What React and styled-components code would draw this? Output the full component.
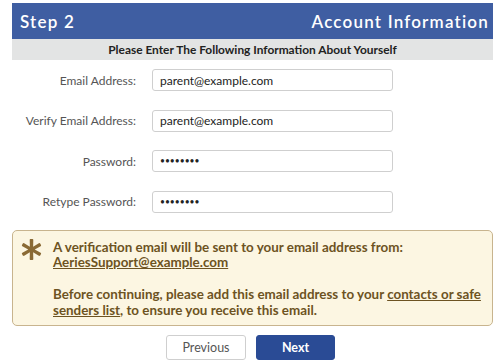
import { Fragment } from 'react';
import styled, { createGlobalStyle } from 'styled-components';
import { FaAsterisk } from 'react-icons/fa';

const GlobalStyle = createGlobalStyle`
  body {
    margin: 0;
    background: #ffffff;
    font-family: "Lato", "Open Sans", sans-serif;
  }
`;

const Page = styled.div`
  width: 481px;
  padding: 3px 0 0 12px;
`;

const Header = styled.div`
  height: 36px;
  padding: 0 4px 0 8px;
  display: flex;
  align-items: center;
  justify-content: space-between;
  background: #3f5ea2;
  color: #ffffff;
  font-size: 17px;
  font-weight: 600;
  letter-spacing: 1.2px;
`;

const SubHeader = styled.div`
  height: 21px;
  display: flex;
  align-items: center;
  justify-content: center;
  background: #e3e4e4;
  color: #222;
  font-size: 11.9px;
  font-weight: 700;
`;

const Form = styled.div`
  display: grid;
  grid-template-columns: 124px 241px;
  column-gap: 16px;
  row-gap: 18.5px;
  align-items: center;
  padding-top: 9px;
`;

const Label = styled.label`
  text-align: right;
  color: #555;
  font-size: 12px;
`;

const Input = styled.input`
  box-sizing: border-box;
  width: 100%;
  height: 22px;
  padding: 0 7px;
  border: 1px solid #cfcfcf;
  border-radius: 3px;
  font-family: inherit;
  font-size: ${p => (p.type === 'password' ? '8.5px' : '12px')};
  color: #222;
`;

const Notice = styled.div`
  margin-top: 17px;
  display: flex;
  gap: 11px;
  padding: 9px 8px 7px 8px;
  background: #fcf6e2;
  border: 1px solid #c8b48e;
  border-radius: 5px;
  color: #6d5322;
  font-size: 13.4px;
  font-weight: 700;
  line-height: 15.8px;
`;

const Icon = styled.div`
  flex: none;
  margin-top: -1px;
  color: #8a6a35;
  font-size: 21px;
  line-height: 0;
`;

const Text = styled.div`
  p {
    margin: 0;
  }
  p + p {
    margin-top: 15.8px;
  }
`;

const Link = styled.a`
  color: inherit;
  text-decoration: underline;
`;

const Buttons = styled.div`
  display: flex;
  justify-content: center;
  gap: 10px;
  margin-top: 9px;
  padding-right: 4px;
`;

const Button = styled.button`
  box-sizing: border-box;
  width: ${p => p.$w}px;
  height: 25px;
  border-radius: 3px;
  font-family: inherit;
  font-size: 12.5px;
  border: 1px solid ${p => (p.$primary ? '#2a4b95' : '#cfcfcf')};
  background: ${p => (p.$primary ? '#2a4b95' : '#ffffff')};
  color: ${p => (p.$primary ? '#ffffff' : '#555')};
  font-weight: ${p => (p.$primary ? 700 : 400)};
`;

const fields = [
  { label: 'Email Address:', type: 'email', value: 'parent@example.com' },
  { label: 'Verify Email Address:', type: 'email', value: 'parent@example.com' },
  { label: 'Password:', type: 'password', value: 'password' },
  { label: 'Retype Password:', type: 'password', value: 'password' },
];

export default function App() {
  return (
    <Page>
      <GlobalStyle />
      <Header>
        <span>Step 2</span>
        <span>Account Information</span>
      </Header>
      <SubHeader>Please Enter The Following Information About Yourself</SubHeader>
      <Form>
        {fields.map(f => (
          <Fragment key={f.label}>
            <Label>{f.label}</Label>
            <Input type={f.type} defaultValue={f.value} readOnly />
          </Fragment>
        ))}
      </Form>
      <Notice>
        <Icon>
          <FaAsterisk />
        </Icon>
        <Text>
          <p>
            A verification email will be sent to your email address from:
            <br />
            <Link href="#">AeriesSupport@example.com</Link>
          </p>
          <p>
            Before continuing, please add this email address to your{' '}
            <Link href="#">contacts or safe senders list</Link>, to ensure you receive this email.
          </p>
        </Text>
      </Notice>
      <Buttons>
        <Button $w={80}>Previous</Button>
        <Button $w={79} $primary>Next</Button>
      </Buttons>
    </Page>
  );
}
